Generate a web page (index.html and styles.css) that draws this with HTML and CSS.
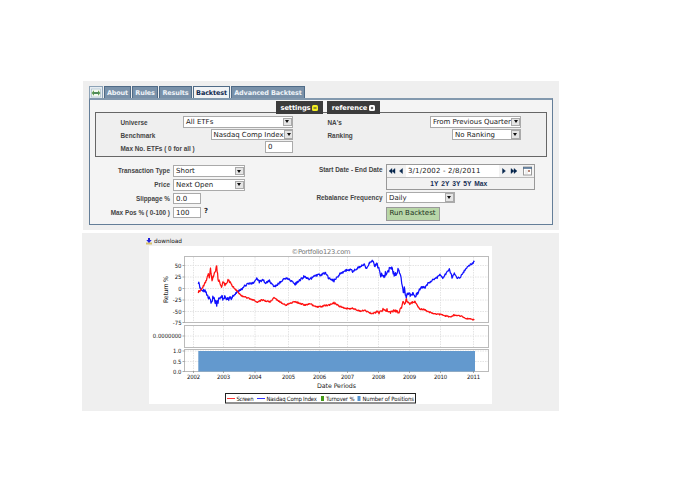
FILE: index.html
```html
<!DOCTYPE html>
<html lang="en">
<head>
<meta charset="utf-8">
<title>Backtest</title>
<link rel="stylesheet" href="styles.css">
</head>
<body>
<main>
  <section class="panel settings-panel">
    <nav class="tabs">
      <span class="expand"><svg width="10" height="10" viewBox="0 0 10 10"><rect x=".5" y="1" width="9" height="8" fill="#f4f9f2" stroke="#a8bccd" stroke-width=".7"/><path d="M.5 5 3 2.200V4H7V2.200L9.500 5 7 7.800V6H3V7.800Z" fill="#62a34c"/><path d="M2 5H8" stroke="#315f77" stroke-width=".7"/></svg></span>
      <a class="about">About</a><a class="rules">Rules</a><a class="results">Results</a><a class="backtest active">Backtest</a><a class="advanced">Advanced Backtest</a>
    </nav>
    <div class="box">
      <div class="toggles">
        <button class="toggle t-settings">settings <svg width="6" height="6" viewBox="0 0 6 6"><rect width="6" height="6" rx="1.500" fill="#f2ed22"/><path d="M1.500 3H4.500" stroke="#333"/></svg></button>
        <button class="toggle t-reference">reference <svg width="6" height="6" viewBox="0 0 6 6"><rect width="6" height="6" rx="1.500" fill="#fff"/><path d="M1.800 3H4.200M3 1.800V4.200" stroke="#333"/></svg></button>
      </div>
      <div class="options">
        <div class="col">
          <div class="line"><label>Universe</label><div class="select universe"><span>All ETFs</span><i></i></div></div>
          <div class="line"><label>Benchmark</label><div class="select bench"><span>Nasdaq Comp Index</span><i></i></div></div>
          <div class="line"><label>Max No. ETFs ( 0 for all )</label><div class="input max">0</div></div>
        </div>
        <div class="col right">
          <div class="line"><label>NA's</label><div class="select nas"><span>From Previous Quarter</span><i></i></div></div>
          <div class="line"><label>Ranking</label><div class="select rank"><span>No Ranking</span><i></i></div></div>
        </div>
      </div>
      <div class="form">
        <div class="left-form">
          <div class="row"><label>Transaction Type</label><div class="select wide"><span>Short</span><i></i></div></div>
          <div class="row"><label>Price</label><div class="select wide"><span>Next Open</span><i></i></div></div>
          <div class="row"><label>Slippage %</label><div class="input">0.0</div></div>
          <div class="row"><label>Max Pos % ( 0-100 )</label><div class="input">100</div><b class="help">?</b></div>
        </div>
        <div class="right-form">
          <div class="row dates"><label class="start">Start Date - End Date</label>
            <div class="datebox">
              <div class="datebar">
                <svg class="prev" width="19" height="11" viewBox="0 0 19 11"><path d="M5 3V8L2 5.500ZM8 3V8L5 5.500ZM15.500 3V8L12.500 5.500Z" fill="#06264d" stroke="#06264d" stroke-width=".4"/></svg>
                <span class="range">3/1/2002 - 2/8/2011</span>
                <svg class="next" width="35" height="11" viewBox="0 0 35 11"><path d="M3.500 3V8L6.500 5.500ZM12 3V8L15 5.500ZM15 3V8L18 5.500Z" fill="#06264d" stroke="#06264d" stroke-width=".4"/><rect x="24.500" y="1.500" width="8" height="8" fill="#fff" stroke="#999"/><path d="M24 2.500H33" stroke="#46688d" stroke-width="1.500"/><path d="M26 5.500H29M26 7.500H29" stroke="#ddd"/><rect x="29" y="4.500" width="2" height="2" fill="#b98778"/></svg>
              </div>
              <div class="presets"><span>1Y</span><span>2Y</span><span>3Y</span><span>5Y</span><span>Max</span></div>
            </div>
          </div>
          <div class="row"><label class="freq">Rebalance Frequency</label><div class="select daily"><span>Daily</span><i></i></div></div>
          <button class="run">Run Backtest</button>
        </div>
      </div>
    </div>
  </section>
  <section class="panel chart-panel">
    <a class="download"><svg width="6" height="7" viewBox="0 0 6 7"><path d="M0 4.500V6.500H6V4.500" fill="#d5c06b"/><path d="M2 0H4V2H5.700L3 5 .3 2H2Z" fill="#2020dd"/></svg><span>download</span></a>
    <svg class="chart" width="343" height="158" viewBox="149 246 343 158">
      <rect x="149" y="246" width="343" height="158" fill="#fff"/>
      <text x="291.500" y="253.500" class="title" textLength="59">©Portfolio123.com</text>
      <g id="grid" class="grid"></g>
      <g class="frames"><rect x="184.500" y="256.500" width="304" height="66"/><rect x="184.500" y="325.500" width="304" height="22"/><rect x="184.500" y="349.500" width="304" height="22"/></g>
      <rect x="198.300" y="351" width="276.700" height="20.500" fill="#6399ce"/>
      <path id="blue" class="series" stroke="#1010ff"/>
      <path id="red" class="series" stroke="#ff1010"/>
      <g id="ticks" class="tick"></g>
      <text class="axis" x="317" y="388" textLength="39">Date Periods</text>
      <text class="axis" transform="translate(167.500 303) rotate(-90)" textLength="27">Return %</text>
      <rect x="225.500" y="393.500" width="190" height="9.500" fill="#fff" stroke="#222"/>
      <g class="legend">
        <path d="M227 398.500H235" stroke="#f33"/><text x="236.500" y="400.500" textLength="17">Screen</text>
        <path d="M257 398.500H265" stroke="#33f"/><text x="266.500" y="400.500" textLength="50.500">Nasdaq Comp Index</text>
        <rect x="321" y="396" width="3" height="5" fill="#459b18"/><text x="326" y="400.500" textLength="28.500">Turnover %</text>
        <rect x="357.500" y="396" width="3" height="5" fill="#5593cf"/><text x="362.500" y="400.500" textLength="51.500">Number of Positions</text>
      </g>
    </svg>
  </section>
</main>
<script src="chart.js"></script>
</body>
</html>
```
FILE: styles.css
```css
* { box-sizing: border-box; }
body { margin: 0; background: #fff; font: 7px/9px "DejaVu Sans", sans-serif; color: #222; }
main { width: 477px; margin-left: 82px; padding-top: 81px; }
svg { display: block; flex: none; }
button { font: inherit; padding: 0; border: 0; }
.panel { background: #efefef; }
.settings-panel { width: 476px; height: 148.500px; margin-left: 1px; padding: 5px 6px; }
.tabs { display: flex; height: 12px; gap: 1px; }
.expand { width: 14px; border: 1px solid #8ca2b6; border-bottom: 0; background: #e6edf2; padding: 1px; }
.tabs a { background: #7991a9; border: 1px solid #4f6b87; border-bottom: 0; color: #eef3f8; font: bold 6.500px/12px "DejaVu Sans", sans-serif; letter-spacing: -.15px; text-align: center; white-space: nowrap; }
.tabs .about { width: 27px; }
.tabs .rules { width: 26px; }
.tabs .results { width: 33px; }
.tabs .backtest { width: 37px; }
.tabs .advanced { width: 74px; }
.tabs a.active { background: #f1f3f5; color: #122b50; }
.box { height: 127px; background: #f4f4f4; border: 1px solid #647e98; border-top: 2px solid #8399ae; padding: 0 5px; }
.toggles { display: flex; gap: 4px; margin-left: 181px; height: 12px; position: relative; }
.toggle { display: flex; align-items: center; justify-content: center; gap: 2px; height: 13px; margin-top: 1px; background: #3b3b3b; color: #fff; font: bold 6.700px/12px "DejaVu Sans", sans-serif; letter-spacing: -.1px; }
.t-settings { width: 47px; }
.t-reference { width: 53px; }
.options { height: 45px; border: 1px solid #666; background: #efefef; display: flex; padding: 3px 24px 0; }
.col { width: 173px; margin-right: 34px; padding-left: .5px; }
.right { width: 194px; margin-right: 0; padding-left: .5px; }
.line { display: flex; align-items: center; justify-content: space-between; height: 11.500px; margin-bottom: 1.200px; }
label { font: bold 6.400px/9px "Liberation Sans", sans-serif; color: #444; white-space: nowrap; position: relative; top: 1px; }
.select, .input { height: 11.500px; background: #fff; border: 1px solid #aaa; line-height: 10.500px; color: #222; white-space: nowrap; flex: none; padding-left: 2px; }
.select { display: flex; justify-content: space-between; }
.select i { width: 9px; height: 8.500px; margin: .5px; flex: none; border: 1px solid #aaa; background: #e5e5e5; display: grid; place-items: center; }
.select i::after { content: ""; border: 2.500px solid transparent; border-top: 3px solid #111; border-bottom: 0; }
.universe { width: 110px; }
.bench { width: 82.500px; }
.bench span, .nas span { letter-spacing: -.03px; }
.max { width: 28px; }
.nas { width: 91px; }
.rank { width: 69px; }
.form { display: flex; padding-top: 8.300px; }
.left-form { width: 196px; }
.row { display: flex; height: 13.800px; align-items: flex-start; }
.left-form label { width: 75px; margin-right: 3px; text-align: right; }
.wide { width: 72px; }
.left-form .input { width: 28px; }
.help { margin-left: 3px; line-height: 9px; }
.right-form { width: 246px; }
.right-form label { width: 91.500px; margin-right: 3.500px; text-align: right; }
.dates { height: 28px; margin-top: -1.500px; }
.datebox { width: 148.500px; height: 26px; border: 1px solid #999; background: #f2f2f2; }
.datebar { display: flex; background: #fff; height: 13px; border-bottom: 1px solid #bbb; line-height: 13px; }
.prev, .next { background: #f2f2f2; height: 12px; }
.range { width: 93px; padding-left: 2px; letter-spacing: .14px; white-space: nowrap; }
.presets { display: flex; justify-content: center; gap: 2.800px; font: bold 6.700px/11px "Liberation Sans", sans-serif; color: #172f54; }
.presets { margin-right: 3px; }
.daily { width: 69px; }
.run { display: block; width: 54px; height: 14px; margin: 1px 0 0 94.500px; border: 1px solid #999; background: #b8d6a8; color: #203020; white-space: nowrap; }
.chart-panel { height: 178px; margin-top: 3.500px; padding-top: 4px; }
.download { display: flex; gap: 2px; height: 9px; margin-left: 64px; color: #111; font-size: 5.800px; align-items: center; }
.chart { margin-left: 67px; font-family: "DejaVu Sans", sans-serif; }
.title { font-size: 6.700px; fill: #777; }
.grid { stroke: #ddd; stroke-width: .8; stroke-dasharray: 1.500 1; }
.frames { fill: none; stroke: #bbb; stroke-width: 1; }
.series { fill: none; stroke-width: 1.250; stroke-linejoin: round; }
.tick, .legend { font-family: "DejaVu Sans Condensed", "DejaVu Sans", sans-serif; font-size: 5.900px; fill: #111; }
.tick path { stroke: #888; stroke-width: .7; }
.axis { font-size: 6.300px; fill: #222; }
```
FILE: chart.js
```javascript
const blue = [198.3,284,202,288.3,206.7,294,211,302.3,213.3,297.3,216.7,304,221,295,223.3,299,225.3,296,228.3,300,233.3,296,238.3,291.3,241.7,289,245,285.7,250,283.3,253.3,283,256.7,278.3,259.3,281.7,263.3,280,266,283.3,269.3,280.7,274,287.3,280,282.3,285,277.7,290,280,295.3,284,300,280,304.3,276.3,310,279.3,315,275.3,320,275,326,273,328.3,277.7,334,280.7,340,274,345,270.7,350.7,269.3,352.7,271.7,358.3,267.3,364.3,264.7,366.7,269,370,261.7,372.7,260.7,375,266.7,377.3,264,380.7,274.7,384,275.7,387.3,271.3,391.3,268.3,394.7,274.7,398,270.7,400,274,401.7,282.3,403.3,293.3,404.3,289,406.3,297.3,408.3,293.3,410.7,295.7,412.7,292.3,415,299,417.3,293.3,421,287.3,425,287.3,428.3,283.3,432.7,280,436.7,278,440,274.7,443.3,278,449.3,268.7,452,277.3,454.3,273.3,456.7,278,460,278.3,463.3,272.3,468.3,266.3,474.3,261.7];
const red = [198.3,293,201,288.3,203.3,286,205.5,283,207.3,277,208.3,273,209.3,279,210.5,269,212,280,214,275,216.7,266,218,279,219.5,282,221.5,286,223.5,281.5,225,285,228,280,231,284,234,288,238,292,241,295.5,245,297,250,299,254,300,257,302.3,262,300,266,301,270,302,274,298,278,300.5,282,303,286,305,291,303,295,301.5,300,303.5,305,305,310,303.5,314,306,319,307,325,305.5,329,305,334,302.7,340,306.5,346,308.5,353,308.5,360,311,365,310.5,370,313,373,313.5,376,312,379,312.5,383,309.5,387,310,391,312.5,395,310.5,399,312,401.5,308,403.3,301,404.5,305,406.5,299.5,409,304,412,303,414.7,301,417,306,420,309,424,309.5,429,312,435,314,441,314.5,446,316,450,317,454,315,458,315.7,462,316.5,465,318.5,470,319,474.3,320];
function trace(id, values, amplitude) {
  let seed = 41;
  let d = `M${values[0]} ${values[1]}`;
  for (let i = 2; i < values.length; i += 2) {
    const [x0, y0, x1, y1] = [values[i - 2], values[i - 1], values[i], values[i + 1]];
    const steps = Math.max(1, Math.round((x1 - x0) / .5));
    for (let j = 1; j <= steps; j++) {
      seed = (seed * 16807) % 2147483647;
      const x = x0 + (x1 - x0) * j / steps;
      const scale = x < 232 || (x > 375 && x < 418) ? 2.2 : 1;
      const noise = (seed / 2147483647 - .5) * amplitude * scale;
      d += `L${x.toFixed(1)} ${(y0 + (y1 - y0) * j / steps + noise).toFixed(1)}`;
    }
  }
  document.getElementById(id).setAttribute("d", d);
}
trace("blue", blue, 2.2);
trace("red", red, 1.3);
let grid = "", ticks = "";
[193.5,223.5,255,288.5,319.5,347.5,378.5,409.5,440.5,473.5].forEach((x, i) => {
  grid += `<path d="M${x} 257V322M${x} 326V347M${x} 350V371"/>`;
  ticks += `<path d="M${x} 371V373"/><text x="${x - 6.5}" y="379" textLength="13">${2002 + i}</text>`;
});
[[265.5,"50"],[277,"25"],[288.5,"0"],[300,"-25"],[311.5,"-50"],[322.5,"-75"],[336,"0.0000000"],[351,"1.0"],[361.5,"0.5"],[371.5,"0.0"]].forEach(([y, label]) => {
  grid += `<path d="M185 ${y}H488"/>`;
  ticks += `<path d="M182.5 ${y}H184.500"/><text x="181.5" y="${y + 2}" text-anchor="end">${label}</text>`;
});
document.getElementById("grid").innerHTML = grid;
document.getElementById("ticks").innerHTML = ticks;
```
